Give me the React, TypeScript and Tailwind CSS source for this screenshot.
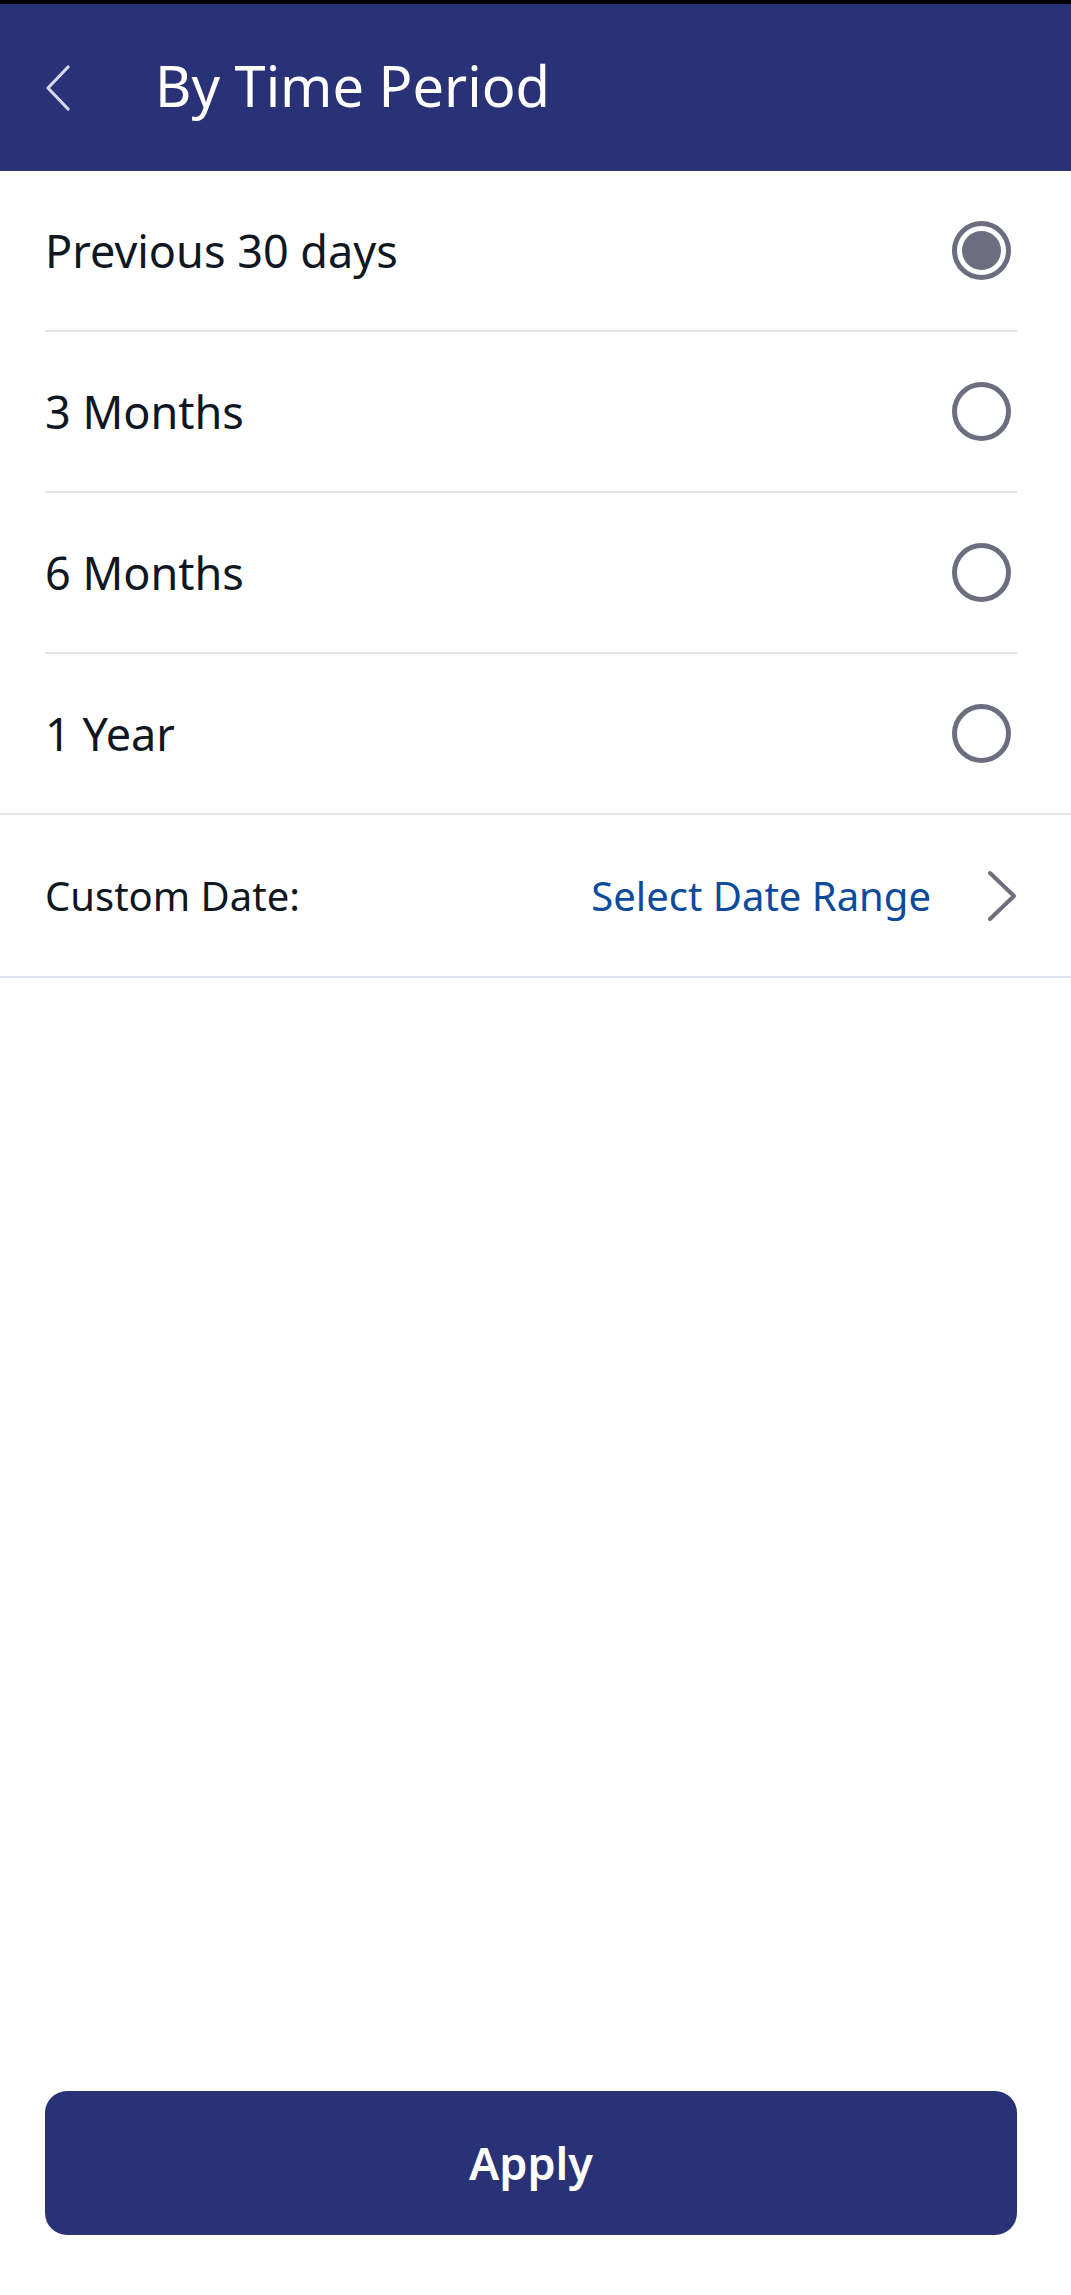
const options = [
  { label: "Previous 30 days", checked: true },
  { label: "3 Months", checked: false },
  { label: "6 Months", checked: false },
  { label: "1 Year", checked: false },
];

function Radio({ checked }: { checked: boolean }) {
  return (
    <div className="w-[59px] h-[59px] rounded-full border-[5px] border-[#6d6d80] flex items-center justify-center">
      {checked && <div className="w-[39px] h-[39px] rounded-full bg-[#6d6d80]" />}
    </div>
  );
}

export default function App() {
  return (
    <div
      className="min-h-[2295px] flex flex-col bg-white"
      style={{ fontFamily: '"Noto Sans", "Open Sans", sans-serif' }}
    >
      {/* ===Header=== */}
      <div className="h-[171px] border-t-4 border-black bg-[#2a3277] flex items-center pl-[45px]">
        <svg width="26" height="46" viewBox="0 0 26 46" fill="none">
          <path d="M23 2 L3 23 L23 44" stroke="#d6d7ec" strokeWidth="3.2" strokeLinecap="round" strokeLinejoin="round" />
        </svg>
        <h1 className="ml-[84px] pb-[5px] text-white text-[56px] leading-none">By Time Period</h1>
      </div>

      {/* ===Options=== */}
      {options.map((o, i) => {
        const last = i === options.length - 1;
        return (
          <div
            key={o.label}
            className={`h-[161px] pl-[45px] pr-[54px] ${last ? "border-b-2 border-[#e6e6ea]" : ""}`}
          >
            <div
              className={`h-full flex items-center justify-between pr-[6px] ${last ? "" : "border-b-2 border-[#e6e6ea]"}`}
            >
              <span className="text-[45px] text-[#0f1722]">{o.label}</span>
              <Radio checked={o.checked} />
            </div>
          </div>
        );
      })}

      {/* ===Custom Date=== */}
      <div className="h-[163px] pl-[45px] pr-[54px] border-b-2 border-[#dde5ee] flex items-center justify-between">
        <span className="text-[40px] text-[#0f1722]">Custom Date:</span>
        <div className="flex items-center">
          <span className="text-[40px] text-[#0d4a9c]">Select Date Range</span>
          <svg width="30" height="52" viewBox="0 0 30 52" fill="none" className="ml-[56px]">
            <path d="M3 3 L27 26 L3 49" stroke="#6e6e7c" strokeWidth="4" strokeLinecap="round" strokeLinejoin="round" />
          </svg>
        </div>
      </div>

      <div className="flex-1" />

      {/* ===Apply=== */}
      <div className="pl-[45px] pr-[54px] pb-[60px]">
        <button className="w-full h-[144px] rounded-[22px] bg-[#2a3277] text-white text-[45px] font-semibold">
          Apply
        </button>
      </div>
    </div>
  );
}
